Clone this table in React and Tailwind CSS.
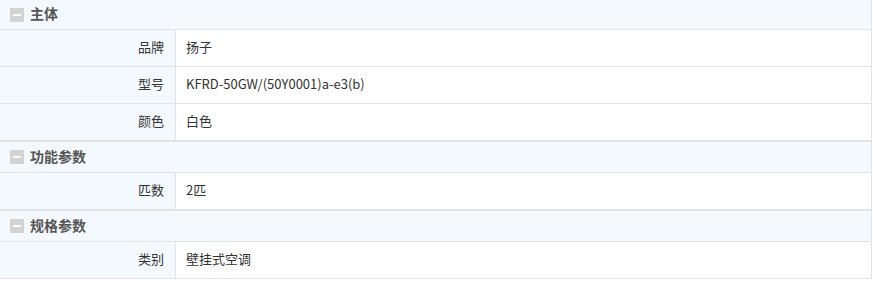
const sections = [
  {
    title: "主体",
    rows: [
      ["品牌", "扬子"],
      ["型号", "KFRD-50GW/(50Y0001)a-e3(b)"],
      ["颜色", "白色"],
    ],
  },
  { title: "功能参数", rows: [["匹数", "2匹"]] },
  { title: "规格参数", rows: [["类别", "壁挂式空调"]] },
];

const MinusBox = () => (
  <span className="flex h-[14px] w-[14px] items-center justify-center bg-[#d3d3d3]">
    <span className="block h-[2px] w-[8px] bg-white" />
  </span>
);

const App = () => {
  return (
    <div
      className="w-[872px] bg-white text-[13px] text-[#333]"
      style={{ fontFamily: '"Microsoft YaHei", "Noto Sans CJK SC", "Noto Sans", sans-serif' }}
    >
      {sections.map((sec, i) => (
        <div
          key={sec.title}
          className={`border-r border-[#e3e3e3] ${i > 0 ? "border-t" : ""}`}
        >
          <div
            className={`flex items-center gap-[6px] border-b border-[#e3e3e3] bg-[#f4f9fd] pl-[10px] ${
              i === 0 ? "h-[30px]" : "h-[31px]"
            }`}
          >
            <MinusBox />
            <span className="-mt-[2px] text-[14px] font-bold text-[#555]">{sec.title}</span>
          </div>
          {sec.rows.map(([label, value]) => (
            <div key={label} className="flex h-[37px] border-b border-[#e3e3e3]">
              <div className="flex w-[176px] shrink-0 items-center justify-end border-r border-[#e3e3e3] bg-[#f4f9fd] pb-[2px] pr-[11px]">
                {label}
              </div>
              <div className="flex items-center pb-[2px] pl-[10px]">{value}</div>
            </div>
          ))}
        </div>
      ))}
    </div>
  );
};

export default App;
